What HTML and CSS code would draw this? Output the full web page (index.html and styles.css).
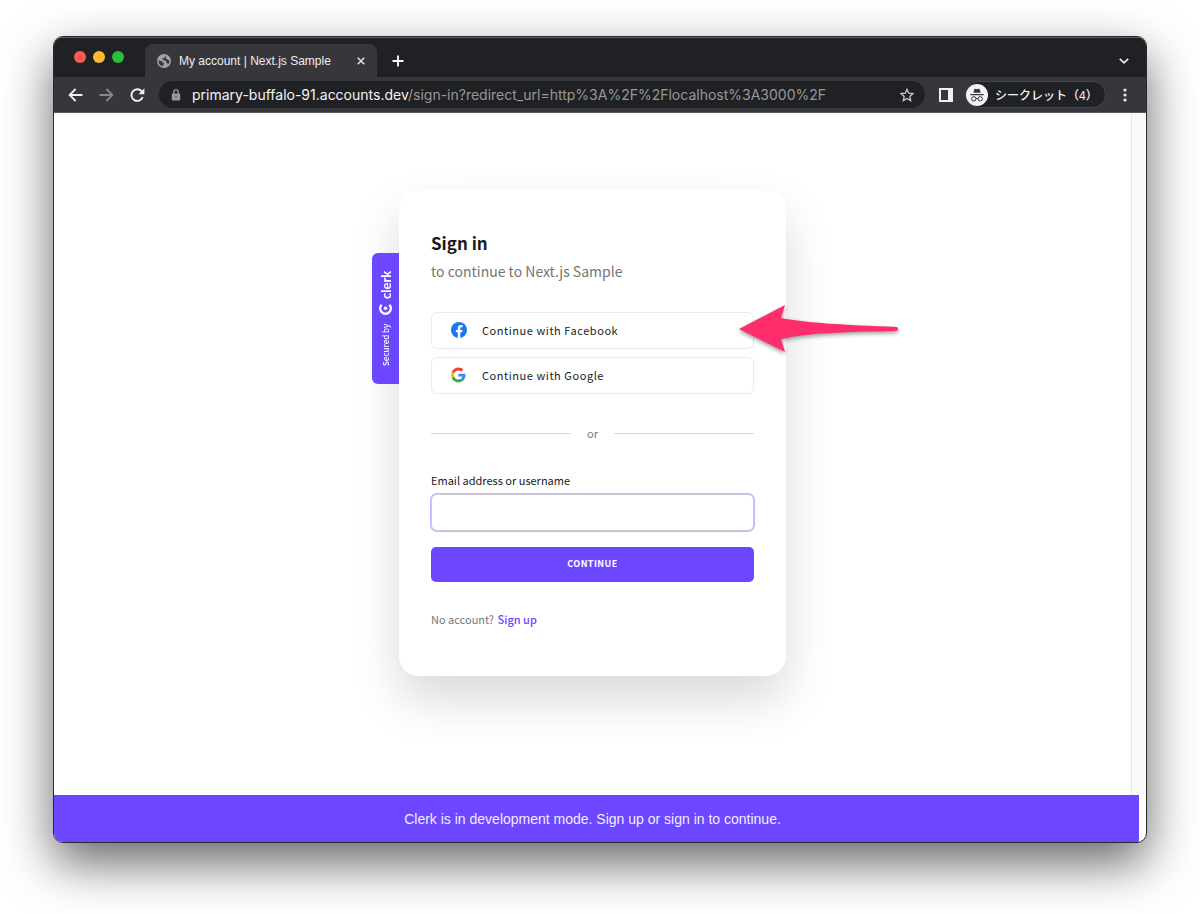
FILE: index.html
```html
<!DOCTYPE html>
<html lang="en">
	<head>
		<meta charset="utf-8">
		<title>My account | Next.js Sample</title>
		<link rel="stylesheet" href="styles.css">
	</head>
	<body>
		<div class="window">

			<!-- Tab strip -->
			<div class="tabstrip">
				<div class="lights">
					<span class="light red"></span>
					<span class="light yellow"></span>
					<span class="light green"></span>
				</div>
				<div class="tab">
					<svg width="14" height="14" viewBox="0 0 14 14">
						<circle cx="7" cy="7" r="7" fill="#a2a3a6"/>
						<path d="M8.6 1.6 Q7.8 4.6 5.2 4.6 Q5.4 6.8 8.2 6.6 Q9.6 7 9.2 8.8 Q10.6 9 10.8 10.8 Q12.6 9 12.6 6.6 Q11.4 6.4 10.4 5.2 Q8.4 5 9 3.2 Z M1.4 6.4 Q5.8 6.6 5.8 8.6 Q7.4 9 7 10.4 Q5.6 10.8 5.6 12.4 Q1.6 10.8 1.4 6.4 Z" fill="#3a393e"/>
					</svg>
					<span class="tab-title">My account | Next.js Sample</span>
					<button class="icon-btn" aria-label="Close tab">
						<svg width="8" height="8" viewBox="0 0 8 8"><path d="M.7 .7 L7.3 7.3 M7.3 .7 L.7 7.3" stroke="#e4e5e8" stroke-width="1.5"/></svg>
					</button>
				</div>
				<button class="icon-btn new-tab" aria-label="New tab">
					<svg width="12" height="12" viewBox="0 0 12 12"><path d="M6 .5 V11.5 M.5 6 H11.5" stroke="#fff" stroke-width="1.8"/></svg>
				</button>
				<button class="icon-btn tab-search" aria-label="Search tabs">
					<svg width="10" height="6" viewBox="0 0 10 6"><path d="M.8 .8 L5 4.8 L9.2 .8" fill="none" stroke="#e8e9eb" stroke-width="1.7"/></svg>
				</button>
			</div>

			<!-- Toolbar -->
			<div class="toolbar">
				<div class="nav">
					<button class="icon-btn" aria-label="Back">
						<svg width="15" height="14" viewBox="0 0 15 14"><path d="M14.5 7 H2 M7.6 1 L1.6 7 L7.6 13" fill="none" stroke="#f1f1f3" stroke-width="1.8"/></svg>
					</button>
					<button class="icon-btn" aria-label="Forward">
						<svg width="15" height="14" viewBox="0 0 15 14"><path d="M.5 7 H13 M7.4 1 L13.4 7 L7.4 13" fill="none" stroke="#87878b" stroke-width="1.8"/></svg>
					</button>
					<button class="icon-btn" aria-label="Reload">
						<svg width="15" height="14" viewBox="0 0 15 14"><path d="M12.7 9.2 A5.8 5.8 0 1 1 11.6 3.2 L13 4.6" fill="none" stroke="#f1f1f3" stroke-width="1.9"/><path d="M14.4 .3 V6.2 H8.5 Z" fill="#f1f1f3"/></svg>
					</button>
				</div>
				<div class="omnibox">
					<svg width="10" height="12" viewBox="0 0 10 12"><rect x=".8" y="4.4" width="8.4" height="7.2" rx="1" fill="#97989b"/><path d="M2.7 5 V3.2 A2.3 2.3 0 0 1 7.3 3.2 V5" fill="none" stroke="#97989b" stroke-width="1.3"/><circle cx="5" cy="8" r="1" fill="#626367"/></svg>
					<div class="url" role="textbox" aria-label="Address"><span class="host">primary-buffalo-91.accounts.dev</span>/sign-in?redirect_url=http%3A%2F%2Flocalhost%3A3000%2F</div>
					<button class="icon-btn" aria-label="Bookmark">
						<svg width="14" height="14" viewBox="0 0 14 14"><path d="M7 1.3 L8.7 5.2 L13 5.6 L9.8 8.4 L10.7 12.6 L7 10.4 L3.3 12.6 L4.2 8.4 L1 5.6 L5.3 5.2 Z" fill="none" stroke="#c6c7ca" stroke-width="1.3"/></svg>
					</button>
				</div>
				<button class="icon-btn side-panel" aria-label="Side panel">
					<svg width="14" height="14" viewBox="0 0 14 14"><path fill-rule="evenodd" d="M0 0 H14 V14 H0 Z M2 2 V12 H9 V2 Z" fill="#f0f0f2"/></svg>
				</button>
				<button class="profile">
					<svg width="22" height="22" viewBox="0 0 22 22">
						<circle cx="11" cy="11" r="11" fill="#f4f4f5"/>
						<path d="M7.4 8.8 L8.4 5.1 Q8.6 4.6 9.1 4.7 L11 5.2 L12.9 4.7 Q13.4 4.6 13.6 5.1 L14.6 8.8 Z" fill="#35353a"/>
						<path d="M4.3 10.6 H17.7" stroke="#35353a" stroke-width="1.2"/>
						<circle cx="7.8" cy="14.8" r="2.2" fill="none" stroke="#35353a"/>
						<circle cx="14.2" cy="14.8" r="2.2" fill="none" stroke="#35353a"/>
						<path d="M10 14.6 Q11 14 12 14.6" fill="none" stroke="#35353a"/>
					</svg>
					<span>シークレット（4）</span>
				</button>
				<button class="icon-btn more" aria-label="Menu">
					<svg width="4" height="14" viewBox="0 0 4 14" fill="#e8e9eb"><circle cx="2" cy="2" r="1.6"/><circle cx="2" cy="7" r="1.6"/><circle cx="2" cy="12" r="1.6"/></svg>
				</button>
			</div>

			<!-- Page -->
			<div class="page">
				<main class="content">
					<section class="card">
						<div class="badge">
							<span>Secured by</span>
							<svg width="13" height="13" viewBox="0 0 13 13">
								<path d="M2.6 10.2 A5.3 5.3 0 1 1 10.4 10.2" fill="none" stroke="#fff" stroke-width="2.4"/>
								<circle cx="6.5" cy="6.8" r="1.8" fill="#fff"/>
							</svg>
							<span class="brand">clerk</span>
						</div>

						<h1>Sign in</h1>
						<p class="subtitle">to continue to Next.js Sample</p>

						<div class="socials">
							<button class="social">
								<svg width="16" height="16" viewBox="0 0 16 16"><circle cx="8" cy="8" r="8" fill="#1877f2"/><path d="M11.1 10.3 L11.5 8 H9.3 V6.5 C9.3 5.9 9.6 5.3 10.5 5.3 H11.6 V3.3 C11.6 3.3 10.7 3.1 9.8 3.1 C8 3.1 6.8 4.2 6.8 6.2 V8 H4.8 V10.3 H6.8 V15.9 H9.3 V10.3 Z" fill="#fff"/></svg>
								Continue with Facebook
							</button>
							<button class="social">
								<svg width="16" height="16" viewBox="0 -2 52 52">
									<path fill="#ea4335" d="M24 9.5c3.5 0 6.7 1.2 9.2 3.6l6.9-6.9C35.9 2.4 30.5 0 24 0 14.6 0 6.5 5.4 2.6 13.2l8 6.2C12.4 13.7 17.7 9.5 24 9.5z"/>
									<path fill="#4285f4" d="M47 24.6c0-1.6-.2-3.1-.4-4.6H24v9h12.9c-.6 3-2.3 5.5-4.8 7.2l7.7 6C44.4 38 47 31.8 47 24.6z"/>
									<path fill="#fbbc05" d="M10.5 28.6c-.5-1.5-.8-3-.8-4.6s.3-3.1.8-4.6l-8-6.2C.9 16.5 0 20.1 0 24s.9 7.5 2.6 10.8l7.9-6.2z"/>
									<path fill="#34a853" d="M24 48c6.5 0 11.9-2.1 15.9-5.8l-7.7-6c-2.2 1.5-4.9 2.3-8.2 2.3-6.3 0-11.6-4.2-13.5-9.9l-8 6.2C6.5 42.6 14.6 48 24 48z"/>
								</svg>
								Continue with Google
							</button>
						</div>

						<div class="divider">or</div>

						<form>
							<label for="identifier">Email address or username</label>
							<input type="text" id="identifier" name="identifier">
							<button class="submit" type="submit">CONTINUE</button>
						</form>

						<p class="footer">No account? <a href="#">Sign up</a></p>

						<!-- Arrow pointing at the Facebook button -->
						<svg class="arrow" width="162" height="54" viewBox="0 0 162 54">
							<path d="M1 26 L47 2 L43 15 C70 20 105 22 159 24 Q161 26 159 28 C105 29 70 30 43 36 L47 49 Z" fill="#ff2d6b"/>
						</svg>
					</section>
				</main>
				<div class="scrollbar"></div>
			</div>
			<div class="banner">Clerk is in development mode. Sign up or sign in to continue.</div>
		</div>
	</body>
</html>
```

FILE: styles.css
```css
* {
	box-sizing: border-box;
}

body {
	margin: 0;
	min-height: 100vh;
	display: flex;
	padding: 36px 53px 71px;
	background-color: white;
	font-family: "Liberation Sans", "Noto Sans CJK JP", sans-serif;
}

button {
	font-family: inherit;
	cursor: pointer;
}

svg {
	display: block;
	flex-shrink: 0;
}

.window {
	flex: 1;
	display: flex;
	flex-direction: column;
	overflow: hidden;
	border: 1px solid #29292d;
	border-radius: 10px;
	background-color: white;
	box-shadow: 0 20px 50px rgba(0, 0, 0, 0.6);
}

.icon-btn {
	display: flex;
	padding: 0;
	border: 0;
	background: none;
}

/* Tab strip */

.tabstrip {
	display: flex;
	height: 40px;
	padding-right: 17px;
	background-color: #202124;
	box-shadow: inset 0 1px 0 #5c5d60;
}

.lights {
	display: flex;
	gap: 7px;
	padding: 14px 21px 0 20px;
}

.light {
	width: 12px;
	height: 12px;
	border-radius: 50%;
}

.red {
	background-color: #ff5a52;
}

.yellow {
	background-color: #febb2c;
}

.green {
	background-color: #2abf3f;
}

.tab {
	display: flex;
	align-items: center;
	gap: 8px;
	width: 232px;
	margin-top: 7px;
	padding: 0 12px;
	border-radius: 8px 8px 0 0;
	background-color: #37363b;
	color: #eeeef0;
}

.tab-title {
	flex: 1;
	font-size: 12px;
	white-space: nowrap;
}

.new-tab {
	align-items: center;
	margin: 8px 0 0 15px;
}

.tab-search {
	align-items: center;
	margin: 8px 0 0 auto;
}

/* Toolbar */

.toolbar {
	display: flex;
	align-items: center;
	height: 36px;
	padding: 0 19px 0 14px;
	border-bottom: 1px solid #5b5a5e;
	background-color: #37363b;
}

.nav {
	display: flex;
	gap: 16px;
	margin-right: 14px;
}

.omnibox {
	flex: 1;
	display: flex;
	align-items: center;
	gap: 11px;
	height: 27px;
	padding: 0 11px 0 12px;
	border-radius: 14px;
	background-color: #202124;
}

.url {
	flex: 1;
	overflow: hidden;
	color: #97989b;
	font-family: Inter, sans-serif;
	font-size: 14px;
	white-space: nowrap;
}

.host {
	color: #f4f4f6;
}

.side-panel {
	margin: 0 12px 0 14px;
}

.profile {
	display: flex;
	align-items: center;
	gap: 7px;
	width: 141px;
	height: 27px;
	padding: 0;
	border: 1px solid #46464a;
	border-radius: 14px;
	background-color: #202124;
	color: #f4f4f6;
	font-size: 12px;
	font-weight: 500;
	white-space: nowrap;
}

.more {
	margin-left: 17px;
}

/* Page */

.page {
	flex: 1;
	display: flex;
}

.content {
	flex: 1;
	display: flex;
	justify-content: center;
	align-items: flex-start;
	padding: 77px 16px 0;
}

.scrollbar {
	width: 15px;
	border-left: 1px solid #e8e8e8;
	background-color: #fafafa;
}

.banner {
	margin-right: 7px;
	padding: 15px 8px 13px 0;
	background-color: #6c47ff;
	color: #f1edff;
	font-size: 14px;
	line-height: 19px;
	text-align: center;
}

/* Sign in card */

.card {
	position: relative;
	width: 100%;
	max-width: 387px;
	padding: 41px 32px 47px;
	border-radius: 20px;
	background-color: white;
	box-shadow: 0 24px 48px rgba(0, 0, 0, 0.15);
	color: #1a1a1d;
	font-family: "Noto Sans CJK JP", sans-serif;
	font-size: 11px;
	line-height: 20px;
}

.badge {
	position: absolute;
	top: 63px;
	right: 100%;
	display: flex;
	align-items: center;
	justify-content: center;
	gap: 3px;
	width: 27px;
	height: 131px;
	border-radius: 0 6px 6px 0;
	background-color: #6c47ff;
	color: white;
	font-size: 8px;
	font-weight: 500;
	writing-mode: vertical-rl;
	transform: rotate(180deg);
}

.badge svg {
	margin-top: 5px;
}

.brand {
	font-family: Lato, sans-serif;
	font-size: 13px;
	font-weight: bold;
}

h1 {
	margin: 0;
	font-size: 17px;
	font-weight: bold;
	line-height: 24px;
}

.subtitle {
	margin: 6px 0 31px;
	color: #757575;
	font-size: 14px;
}

.socials {
	display: flex;
	flex-direction: column;
	gap: 8px;
}

.social {
	display: flex;
	align-items: center;
	gap: 15px;
	height: 37px;
	padding: 0 19px 2px;
	border: 1px solid #ebebeb;
	border-radius: 6px;
	background-color: white;
	color: #1a1a1d;
	font-size: 11px;
	line-height: 16px;
	letter-spacing: 0.05em;
}

.divider {
	display: flex;
	align-items: center;
	gap: 16px;
	margin: 29px 0 27px;
	color: #757575;
}

.divider::before,
.divider::after {
	content: "";
	flex: 1;
	height: 1px;
	background-color: #d8d8d8;
}

form {
	display: flex;
	flex-direction: column;
}

input {
	height: 37px;
	margin: 4px 0 16px;
	padding: 0 12px;
	border: 1px solid #cfcbdc;
	border-radius: 6px;
	outline: none;
	box-shadow: 0 0 0 1px #c4b5ff;
	font-family: inherit;
	font-size: 11px;
}

.submit {
	height: 35px;
	padding-bottom: 3px;
	border: 0;
	border-radius: 5px;
	background-color: #6c47ff;
	color: white;
	font-size: 9px;
	font-weight: bold;
	letter-spacing: 0.05em;
}

.footer {
	margin: 27px 0 0;
	color: #757575;
}

.footer a {
	margin-left: 1px;
	color: #6c47ff;
	font-weight: 500;
	text-decoration: none;
}

.arrow {
	position: absolute;
	top: 113px;
	left: 339px;
	filter: drop-shadow(0 2px 2px rgba(0, 0, 0, 0.4));
}
```
